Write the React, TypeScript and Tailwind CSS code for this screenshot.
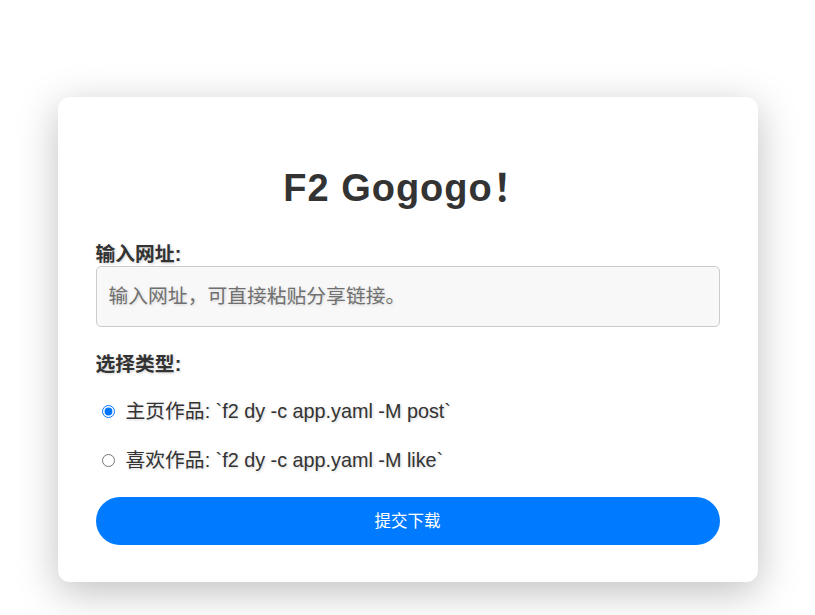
import React, { useState } from "react";

const FONT = "font-['Liberation_Sans','Noto_Sans_CJK_SC',sans-serif]";
const SOFT = "[text-shadow:1px_1px_3px_rgba(0,0,0,0.18)]";

const MODES = [
  { value: "post", label: "主页作品: `f2 dy -c app.yaml -M post`" },
  { value: "like", label: "喜欢作品: `f2 dy -c app.yaml -M like`" },
];

export default function App() {
  const [mode, setMode] = useState("post");
  const [url, setUrl] = useState("");

  return (
    <div className={`${FONT} min-h-screen bg-white text-[#333] pt-[97px] pb-[40px]`}>
      <div className="mx-auto w-[700px] rounded-xl bg-white px-[38px] pt-[67px] pb-[37px] shadow-[0_10px_40px_rgba(0,0,0,0.25)]">
        <h1 className="text-center text-[38px] leading-[48px] font-bold tracking-[1px] mb-[30px]">
          F2 Gogogo！
        </h1>

        <form onSubmit={(e) => e.preventDefault()} className="flex flex-col">
          <label className={`text-[19.8px] leading-[24px] font-bold ${SOFT}`}>输入网址:</label>
          <input
            value={url}
            onChange={(e) => setUrl(e.target.value)}
            placeholder="输入网址，可直接粘贴分享链接。"
            className="h-[61px] w-full rounded-[5px] border border-[#ccc] bg-[#f8f8f8] px-[12px] text-[19.8px] outline-none placeholder:text-[#707070] [&::placeholder]:[text-shadow:1px_1px_3px_rgba(0,0,0,0.15)]"
          />

          <div className={`mt-[25px] text-[19.8px] leading-[24px] font-bold ${SOFT}`}>选择类型:</div>

          <div className="mt-[23px] flex flex-col gap-[25px]">
            {MODES.map((m) => (
              <label key={m.value} className="flex items-center h-[24px] pl-[6px] cursor-pointer">
                <input
                  type="radio"
                  name="mode"
                  value={m.value}
                  checked={mode === m.value}
                  onChange={() => setMode(m.value)}
                  className="m-0 h-[13px] w-[13px]"
                />
                <span className={`ml-[11px] text-[19.8px] leading-[24px] ${SOFT}`}>{m.label}</span>
              </label>
            ))}
          </div>

          <button
            type="submit"
            className="mt-[25px] h-[48px] w-full rounded-full bg-[#007bff] text-[16.5px] text-white"
          >
            提交下载
          </button>
        </form>
      </div>
    </div>
  );
}
